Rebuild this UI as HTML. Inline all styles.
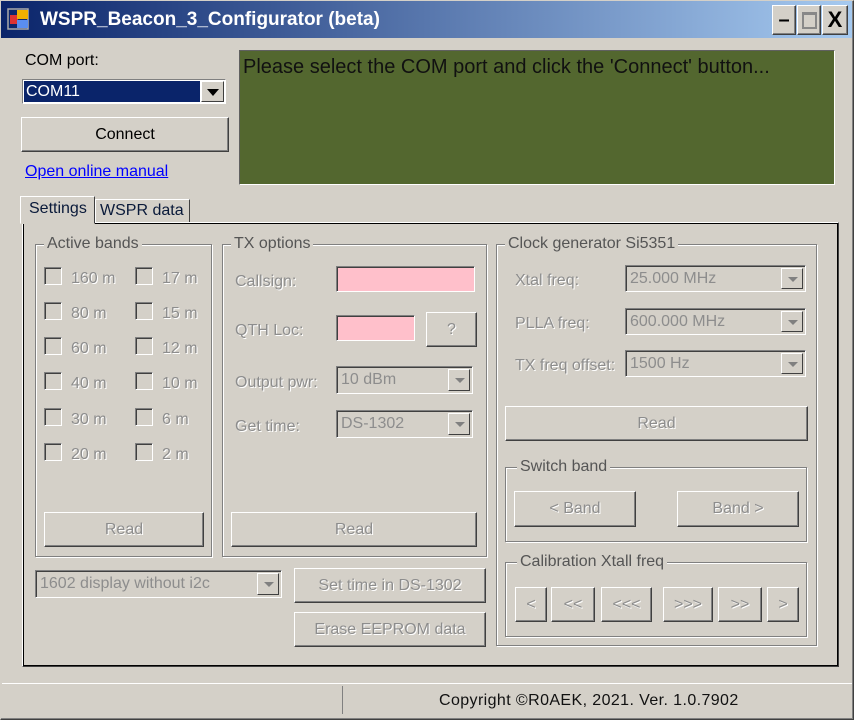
<!DOCTYPE html>
<html><head><meta charset="utf-8"><style>
*{box-sizing:border-box;margin:0;padding:0}
body{width:854px;height:720px;background:#d4d0c8;font-family:"Liberation Sans",sans-serif;font-size:16px;position:relative;overflow:hidden;color:#000}
.a{position:absolute;white-space:nowrap}
.btn{position:absolute;background:#d4d0c8;border:1px solid;border-color:#fff #404040 #404040 #fff;box-shadow:inset -1px -1px 0 #808080;display:flex;align-items:center;justify-content:center;color:#8d8d8d;text-shadow:1px 1px 0 #fff}
.btn.en{color:#000;text-shadow:none}
.grp{position:absolute;border:1px solid #808080;box-shadow:1px 1px 0 #fff, inset 1px 1px 0 #fff}
.grp span{position:absolute;top:-10px;left:8px;background:#d4d0c8;padding:0 3px;color:#555;line-height:18px}
.dis{color:#8d8d8d;text-shadow:1px 1px 0 #fff}
.a.dis{margin-top:2px}
.cb{position:absolute;width:18px;height:18px;border:1px solid;border-color:#808080 #fff #fff #808080;box-shadow:inset 1px 1px 0 #404040}
.cmb{position:absolute;border:1px solid;border-color:#808080 #fff #fff #808080;box-shadow:inset 1px 1px 0 #404040;color:#8d8d8d;padding:4px 0 0 4px}
.cmb .ar{position:absolute;right:2px;top:2px;bottom:2px;width:22px;border:1px solid;border-color:#fff #404040 #404040 #fff;background:#d4d0c8}
.cmb .ar:after{content:"";position:absolute;left:6px;top:8px;border:5px solid transparent;border-top:5px solid #808080}
.pink{position:absolute;background:#ffc0cb;border:1px solid;border-color:#808080 #fff #fff #808080;box-shadow:inset 1px 1px 0 #404040}
</style></head><body>
<div class="a" style="left:0;top:0;width:854px;height:38px;background:linear-gradient(90deg,#0a246a,#a6caf0)"></div>
<svg class="a" style="left:7px;top:8px" width="22" height="22"><rect x="1" y="1" width="20" height="20" fill="none" stroke="#aaa" stroke-width="1.5"/><rect x="3" y="7" width="8" height="9" fill="#d33"/><rect x="10" y="2" width="11" height="9" fill="#f0b000"/><rect x="10" y="12" width="11" height="8" fill="#5a8ef0"/></svg>
<div class="a" style="left:40px;top:9px;color:#fff;font-weight:bold;font-size:19px">WSPR_Beacon_3_Configurator (beta)</div>
<div class="btn en" style="left:772px;top:5px;width:24px;height:30px;font-weight:bold;font-size:20px">&#8211;</div>
<div class="btn" style="left:797px;top:5px;width:24px;height:30px"><div style="width:15px;height:17px;border:2px solid #888;border-top-width:3px"></div></div>
<div class="btn en" style="left:822px;top:5px;width:26px;height:30px;font-weight:bold;font-size:22px">X</div>

<div class="a" style="left:25px;top:52px">COM port:</div>
<div class="a" style="left:22px;top:79px;width:204px;height:25px;border:1px solid;border-color:#808080 #fff #fff #808080;background:#fff"><div style="position:absolute;left:1px;top:1px;width:176px;height:21px;background:#0a246a;color:#fff;padding:2px 0 0 2px">COM11</div><div style="position:absolute;right:1px;top:1px;width:23px;height:21px;border:1px solid;border-color:#fff #404040 #404040 #fff;background:#d4d0c8"><div style="position:absolute;left:5px;top:7px;border:6px solid transparent;border-top:7px solid #000"></div></div></div>
<div class="btn en" style="left:21px;top:117px;width:208px;height:35px">Connect</div>
<div class="a" style="left:25px;top:163px;color:#00f;text-decoration:underline">Open online manual</div>
<div class="a" style="left:239px;top:50px;width:596px;height:135px;background:#53672f;border:1px solid;border-color:#606060 #fff #fff #606060;padding:5px 3px;font-size:20px;color:#111">Please select the COM port and click the 'Connect' button...</div>

<div class="a" style="left:95px;top:199px;width:95px;height:24px;border:1px solid;border-color:#fff #404040 #d4d0c8 #fff;padding:2px 4px;color:#0a1a3a">WSPR data</div>
<div class="a" style="left:22px;top:222px;width:817px;height:445px;border:1px solid;border-color:#fff #404040 #404040 #fff;box-shadow:inset -1px -1px 0 #000, inset 1px 1px 0 #000"></div>
<div class="a" style="left:20px;top:196px;width:75px;height:28px;border:1px solid;border-color:#fff #404040 #d4d0c8 #fff;background:#d4d0c8;padding:3px 8px;color:#0a1a3a">Settings</div>

<div class="grp" style="left:35px;top:244px;width:177px;height:313px"><span>Active bands</span></div>
<div class="cb" style="left:44px;top:267px"></div><div class="a dis" style="left:71px;top:268px">160 m</div>
<div class="cb" style="left:135px;top:267px"></div><div class="a dis" style="left:162px;top:268px">17 m</div>
<div class="cb" style="left:44px;top:302px"></div><div class="a dis" style="left:71px;top:303px">80 m</div>
<div class="cb" style="left:135px;top:302px"></div><div class="a dis" style="left:162px;top:303px">15 m</div>
<div class="cb" style="left:44px;top:337px"></div><div class="a dis" style="left:71px;top:338px">60 m</div>
<div class="cb" style="left:135px;top:337px"></div><div class="a dis" style="left:162px;top:338px">12 m</div>
<div class="cb" style="left:44px;top:372px"></div><div class="a dis" style="left:71px;top:373px">40 m</div>
<div class="cb" style="left:135px;top:372px"></div><div class="a dis" style="left:162px;top:373px">10 m</div>
<div class="cb" style="left:44px;top:408px"></div><div class="a dis" style="left:71px;top:409px">30 m</div>
<div class="cb" style="left:135px;top:408px"></div><div class="a dis" style="left:162px;top:409px">6 m</div>
<div class="cb" style="left:44px;top:443px"></div><div class="a dis" style="left:71px;top:444px">20 m</div>
<div class="cb" style="left:135px;top:443px"></div><div class="a dis" style="left:162px;top:444px">2 m</div>
<div class="btn" style="left:44px;top:512px;width:160px;height:35px">Read</div>

<div class="grp" style="left:222px;top:244px;width:265px;height:313px"><span>TX options</span></div>
<div class="a dis" style="left:235px;top:271px">Callsign:</div>
<div class="pink" style="left:336px;top:266px;width:139px;height:26px"></div>
<div class="a dis" style="left:235px;top:320px">QTH Loc:</div>
<div class="pink" style="left:336px;top:315px;width:79px;height:26px"></div>
<div class="btn" style="left:426px;top:312px;width:51px;height:35px">?</div>
<div class="a dis" style="left:235px;top:372px">Output pwr:</div>
<div class="cmb" style="left:336px;top:366px;width:137px;height:28px">10 dBm<div class="ar"></div></div>
<div class="a dis" style="left:235px;top:416px">Get time:</div>
<div class="cmb" style="left:336px;top:410px;width:137px;height:28px">DS-1302<div class="ar"></div></div>
<div class="btn" style="left:231px;top:512px;width:246px;height:35px">Read</div>

<div class="cmb" style="left:35px;top:570px;width:247px;height:28px">1602 display without i2c<div class="ar"></div></div>
<div class="btn" style="left:294px;top:568px;width:192px;height:35px">Set time in DS-1302</div>
<div class="btn" style="left:294px;top:612px;width:192px;height:35px">Erase EEPROM data</div>

<div class="grp" style="left:496px;top:244px;width:321px;height:402px"><span>Clock generator Si5351</span></div>
<div class="a dis" style="left:515px;top:270px">Xtal freq:</div>
<div class="cmb" style="left:625px;top:265px;width:181px;height:27px">25.000 MHz<div class="ar"></div></div>
<div class="a dis" style="left:515px;top:313px">PLLA freq:</div>
<div class="cmb" style="left:625px;top:308px;width:181px;height:27px">600.000 MHz<div class="ar"></div></div>
<div class="a dis" style="left:515px;top:355px">TX freq offset:</div>
<div class="cmb" style="left:625px;top:350px;width:181px;height:27px">1500 Hz<div class="ar"></div></div>
<div class="btn" style="left:505px;top:406px;width:303px;height:35px">Read</div>

<div class="grp" style="left:505px;top:467px;width:302px;height:75px"><span style="left:11px">Switch band</span></div>
<div class="btn" style="left:514px;top:491px;width:122px;height:36px">&lt; Band</div>
<div class="btn" style="left:677px;top:491px;width:122px;height:36px">Band &gt;</div>

<div class="grp" style="left:505px;top:562px;width:302px;height:75px"><span style="left:11px">Calibration Xtall freq</span></div>
<div class="btn" style="left:515px;top:587px;width:32px;height:35px">&lt;</div>
<div class="btn" style="left:551px;top:587px;width:44px;height:35px">&lt;&lt;</div>
<div class="btn" style="left:601px;top:587px;width:51px;height:35px">&lt;&lt;&lt;</div>
<div class="btn" style="left:663px;top:587px;width:50px;height:35px">&gt;&gt;&gt;</div>
<div class="btn" style="left:718px;top:587px;width:44px;height:35px">&gt;&gt;</div>
<div class="btn" style="left:767px;top:587px;width:32px;height:35px">&gt;</div>

<div class="a" style="left:2px;top:683px;width:850px;height:1px;background:#fff"></div>
<div class="a" style="left:342px;top:686px;width:1px;height:28px;background:#808080"></div>
<div class="a" style="left:439px;top:692px;color:#111;letter-spacing:0.4px">Copyright ©R0AEK, 2021. Ver. 1.0.7902</div>
<div class="a" style="left:0;top:0;width:854px;height:720px;border:1px solid;border-color:#d4d0c8 #404040 #404040 #d4d0c8;box-shadow:inset -1px -1px 0 #808080"></div>
</body></html>
